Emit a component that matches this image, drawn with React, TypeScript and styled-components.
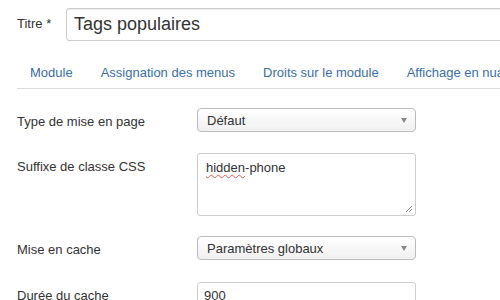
import styled, { createGlobalStyle } from "styled-components";

const GlobalStyle = createGlobalStyle`
  body {
    margin: 0;
    background: #fff;
    font-family: "Liberation Sans", Arial, sans-serif;
    font-size: 13px;
    color: #333;
    overflow: hidden;
  }
`;

const Page = styled.div`
  width: 500px;
  height: 300px;
  overflow: hidden;
  padding-left: 17px;
  box-sizing: border-box;
`;

const TitleRow = styled.div`
  display: flex;
  align-items: center;
  padding-top: 8px;
  height: 33px;
  box-sizing: content-box;
  width: 600px;
`;

const TitleLabel = styled.label`
  width: 49px;
  font-size: 13px;
  margin-top: -2px;
`;

const TitleInput = styled.div`
  flex: 1;
  height: 31px;
  border: 1px solid #ccc;
  border-radius: 3px;
  box-shadow: inset 0 1px 1px rgba(0, 0, 0, 0.075);
  font-size: 18px;
  color: #333;
  display: flex;
  align-items: center;
  padding-left: 7px;
`;

const Tabs = styled.ul`
  list-style: none;
  margin: 15px 0 0;
  padding: 0;
  display: flex;
  width: 600px;
  border-bottom: 1px solid #ddd;
  height: 32px;
`;

const Tab = styled.li`
  padding: 9px 13px 0;
  color: #3a6ea5;
  white-space: nowrap;
  font-size: 13px;
  margin-right: 2px;
`;

const Form = styled.div`
  margin-top: 19px;
  display: flex;
  flex-direction: column;
`;

const Row = styled.div<{ $gap?: number }>`
  display: flex;
  align-items: flex-start;
  margin-bottom: ${(p) => p.$gap ?? 21}px;
`;

const Label = styled.label`
  width: 180px;
  padding-top: 6px;
  color: #333;
`;

const Select = styled.div`
  width: 219px;
  height: 24px;
  box-sizing: border-box;
  border: 1px solid #bbb;
  border-radius: 4px;
  background: linear-gradient(#fff, #f0f0f0);
  display: flex;
  align-items: center;
  justify-content: space-between;
  padding: 0 8px 0 9px;
  color: #333;
`;

const Caret = styled.span`
  width: 0;
  height: 0;
  border-left: 3.5px solid transparent;
  border-right: 3.5px solid transparent;
  border-top: 5px solid #888;
  margin-top: 1px;
`;

const TextArea = styled.div`
  width: 219px;
  height: 63px;
  box-sizing: border-box;
  border: 1px solid #ccc;
  border-radius: 3px;
  padding: 6px 8px;
  position: relative;
`;

const Spell = styled.span`
  text-decoration: underline wavy #e55;
  text-decoration-thickness: 1px;
  text-underline-offset: 2px;
`;

const Grip = styled.svg`
  position: absolute;
  right: 2px;
  bottom: 2px;
`;

const TextInput = styled.div`
  width: 219px;
  height: 26px;
  box-sizing: border-box;
  border: 1px solid #ccc;
  border-radius: 3px;
  padding: 5px 6px;
`;

export default function App() {
  return (
    <Page>
      <GlobalStyle />
      <TitleRow>
        <TitleLabel>Titre *</TitleLabel>
        <TitleInput>Tags populaires</TitleInput>
      </TitleRow>
      <Tabs>
        <Tab>Module</Tab>
        <Tab>Assignation des menus</Tab>
        <Tab>Droits sur le module</Tab>
        <Tab>Affichage en nuage</Tab>
      </Tabs>
      <Form>
        <Row>
          <Label>Type de mise en page</Label>
          <Select>
            Défaut
            <Caret />
          </Select>
        </Row>
        <Row $gap={20}>
          <Label>Suffixe de classe CSS</Label>
          <TextArea>
            <Spell>hidden</Spell>-phone
            <Grip width="8" height="8" viewBox="0 0 8 8">
              <path d="M7 1 L1 7 M7 4 L4 7" stroke="#888" strokeWidth="1" />
            </Grip>
          </TextArea>
        </Row>
        <Row $gap={22}>
          <Label>Mise en cache</Label>
          <Select>
            Paramètres globaux
            <Caret />
          </Select>
        </Row>
        <Row>
          <Label>Durée du cache</Label>
          <TextInput>900</TextInput>
        </Row>
      </Form>
    </Page>
  );
}
